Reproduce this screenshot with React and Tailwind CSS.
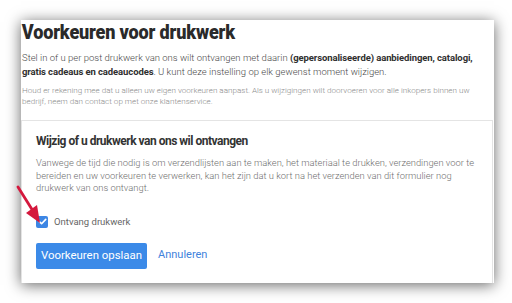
import React from "react";

const Arrow = () => (
  <svg
    className="absolute left-[14px] top-[184px] pointer-events-none"
    width="34"
    height="42"
    viewBox="0 0 34 42"
  >
    <line x1="4" y1="3" x2="19" y2="27" stroke="#d4183d" strokeWidth="2.8" strokeLinecap="round" />
    <polygon points="26,39 12,29 23,21" fill="#d4183d" />
  </svg>
);

const App = () => {
  return (
    <div className="relative w-[512px] h-[303px] bg-white overflow-hidden font-['Roboto',sans-serif] pt-[20px] pl-[21px]">
      <div className="w-[473px] h-[263px] bg-white flex flex-col shadow-[0_2px_14px_rgba(0,0,0,0.6)]">
        <h1 className="pl-[1px] text-[21px] leading-[24px] font-black text-[#2a2a2a] tracking-[-0.2px] origin-left scale-x-[0.86] whitespace-nowrap">
          Voorkeuren voor drukwerk
        </h1>

        <p className="mt-[7px] pl-[1px] pr-[4px] text-[9.5px] leading-[14px] font-light text-[#4a4a4a]">
          Stel in of u per post drukwerk van ons wilt ontvangen met daarin{" "}
          <b className="font-bold tracking-[-0.1px] text-[#2f2f2f]">
            (gepersonaliseerde) aanbiedingen, catalogi, gratis cadeaus en cadeaucodes
          </b>
          . U kunt deze instelling op elk gewenst moment wijzigen.
        </p>

        <p className="mt-[6px] pl-[1px] pr-[6px] text-[8.1px] leading-[11px] font-light text-[#8a8a8a]">
          Houd er rekening mee dat u alleen uw eigen voorkeuren aanpast. Als u wijzigingen wilt doorvoeren voor alle
          inkopers binnen uw bedrijf, neem dan contact op met onze klantenservice.
        </p>

        <div className="mt-[13px] mr-[1px] flex-1 border border-b-0 border-[#e4e4e4] pl-[14px] pr-[8px] pt-[12px]">
          <h2 className="text-[12px] leading-[16px] font-bold tracking-[-0.5px] text-[#333]">
            Wijzig of u drukwerk van ons wil ontvangen
          </h2>
          <p className="mt-[8px] text-[9.4px] leading-[12.5px] font-light text-[#6f6f6f]">
            Vanwege de tijd die nodig is om verzendlijsten aan te maken, het materiaal te drukken, verzendingen voor te
            bereiden en uw voorkeuren te verwerken, kan het zijn dat u kort na het verzenden van dit formulier nog
            drukwerk van ons ontvangt.
          </p>

          <label className="mt-[21px] flex items-center gap-[6px]">
            <span className="w-[12px] h-[12px] rounded-[2px] bg-[#3d86e4] flex items-center justify-center">
              <svg width="9" height="9" viewBox="0 0 10 10">
                <path d="M1.5 5.2 L4 7.5 L8.6 2.6" fill="none" stroke="white" strokeWidth="1.8" strokeLinecap="round" strokeLinejoin="round" />
              </svg>
            </span>
            <span className="text-[9.5px] leading-[12px] text-[#666]">Ontvang drukwerk</span>
          </label>

          <div className="mt-[15px] flex items-center gap-[11px]">
            <button className="w-[111px] h-[26px] rounded-[2px] bg-[#3b8ae8] text-white text-[11.4px] leading-none">
              Voorkeuren opslaan
            </button>
            <span className="text-[11px] text-[#3f83dc]">Annuleren</span>
          </div>
        </div>
      </div>
      <Arrow />
    </div>
  );
};

export default App;
